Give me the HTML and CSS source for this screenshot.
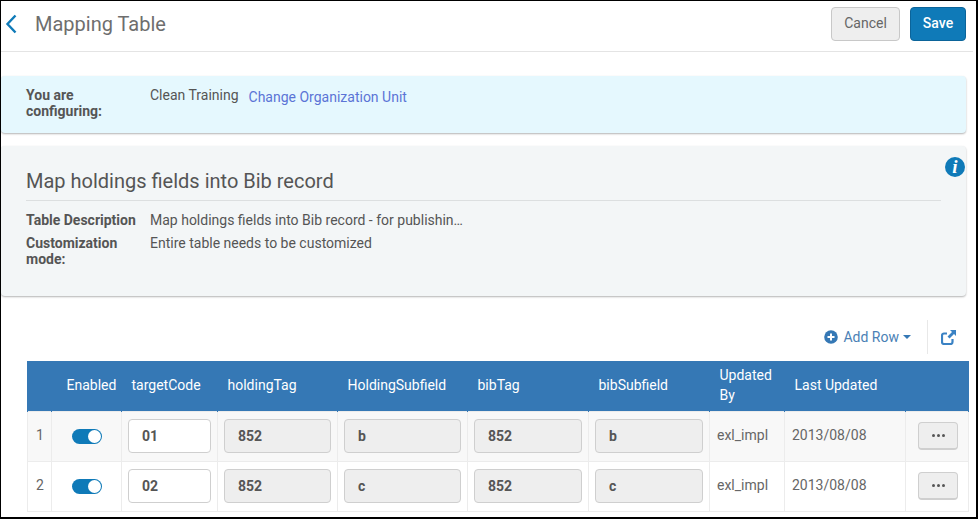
FILE: index.html
```html
<!DOCTYPE html>
<html lang="en">
<head>
<meta charset="utf-8">
<title>Mapping Table</title>
<link rel="stylesheet" href="styles.css">
</head>
<body>
<div class="frame">
  <header class="topbar">
    <div class="title-group">
      <svg class="back" width="12" height="20" viewBox="0 0 12 20"><path d="M10.500 1.500 2.500 10 10.500 18.500" fill="none" stroke="#0f7ab8" stroke-width="2.400"/></svg>
      <h1 class="page-title">Mapping Table</h1>
    </div>
    <div class="actions">
      <button class="btn btn-cancel">Cancel</button>
      <button class="btn btn-save">Save</button>
    </div>
  </header>
  <section class="card card-config">
    <div class="label config-label">You are configuring:</div>
    <div class="config-value">Clean Training</div>
    <a class="config-link">Change Organization Unit</a>
  </section>
  <section class="card card-info">
    <svg class="info-icon" width="20" height="20" viewBox="0 0 20 20"><circle cx="10" cy="10" r="10" fill="#0f7ab8"/><text class="info-i" x="10" y="15.500" text-anchor="middle">i</text></svg>
    <h2 class="info-title">Map holdings fields into Bib record</h2>
    <div class="info-row">
      <div class="label">Table Description</div>
      <div class="value">Map holdings fields into Bib record - for publishin…</div>
    </div>
    <div class="info-row">
      <div class="label">Customization mode:</div>
      <div class="value">Entire table needs to be customized</div>
    </div>
  </section>
  <div class="toolbar">
    <a class="add-row">
      <svg width="14" height="14" viewBox="0 0 14 14"><circle cx="7" cy="7" r="6.800" fill="#3578b5"/><path d="M7 3.500v7M3.500 7h7" stroke="#fff" stroke-width="2"/></svg>
      <span>Add Row</span>
      <span class="caret"></span>
    </a>
    <div class="tool-sep">
      <svg width="15" height="15" viewBox="0 0 15 15"><path d="M6 3.500H3A2 2 0 0 0 1 5.500v6.500a2 2 0 0 0 2 2h6.500a2 2 0 0 0 2-2V9" fill="none" stroke="#3a82c4" stroke-width="2.200"/><path d="M9 0h6v6l-2-2L8.500 8.500 6.500 6.500 11 2z" fill="#3a82c4"/></svg>
    </div>
  </div>
  <table class="grid">
    <thead>
      <tr>
        <th class="c-n"></th><th class="c-en">Enabled</th><th class="c-code">targetCode</th><th class="c-ht">holdingTag</th><th class="c-hs">HoldingSubfield</th><th class="c-bt">bibTag</th><th class="c-bs">bibSubfield</th><th class="c-by">Updated By</th><th class="c-last">Last Updated</th><th class="c-act"></th>
      </tr>
    </thead>
    <tbody>
      <tr class="odd">
        <td class="num">1</td>
        <td class="center"><span class="toggle"></span></td>
        <td><div class="field field-edit">01</div></td>
        <td><div class="field">852</div></td>
        <td><div class="field">b</div></td>
        <td><div class="field">852</div></td>
        <td><div class="field">b</div></td>
        <td class="txt">exl_impl</td>
        <td class="txt">2013/08/08</td>
        <td class="center cell-act"><button class="more"><span></span><span></span><span></span></button></td>
      </tr>
      <tr>
        <td class="num">2</td>
        <td class="center"><span class="toggle"></span></td>
        <td><div class="field field-edit">02</div></td>
        <td><div class="field">852</div></td>
        <td><div class="field">c</div></td>
        <td><div class="field">852</div></td>
        <td><div class="field">c</div></td>
        <td class="txt">exl_impl</td>
        <td class="txt">2013/08/08</td>
        <td class="center cell-act"><button class="more"><span></span><span></span><span></span></button></td>
      </tr>
    </tbody>
  </table>
</div>
</body>
</html>
```
FILE: styles.css
```css
* { box-sizing: border-box; }
html, body { margin: 0; padding: 0; }
body {
  width: 978px;
  height: 519px;
  overflow: hidden;
  background: #fff;
  font-family: Roboto, "Liberation Sans", sans-serif;
  font-size: 14px;
  color: #555;
}
.frame {
  width: 978px;
  height: 519px;
  border: 1px solid #000;
  border-right-width: 2px;
  border-bottom-width: 2px;
  overflow: hidden;
}
.topbar {
  height: 51px;
  border-bottom: 1px solid #e4e4e4;
  margin-right: 3px;
  display: flex;
  justify-content: space-between;
  align-items: flex-start;
  padding: 6px 7px 0 4px;
}
.title-group { display: flex; align-items: center; height: 34px; }
.back { display: block; margin-right: 18px; }
.page-title { margin: 0; font-size: 20px; font-weight: 400; color: #6e6e6e; }
.actions { display: flex; gap: 10px; }
.btn {
  height: 34px;
  border-radius: 4px;
  font: 14px Roboto, sans-serif;
  padding: 0 0 2px;
}
.btn-cancel { width: 69px; background: #eee; border: 1px solid #c8c8c8; color: #666; }
.btn-save { width: 56px; background: #0f7ab8; border: 1px solid #0b649a; color: #fff; font-weight: 500; }
.card {
  margin-right: 10px;
  border-radius: 4px;
  box-shadow: 0 1px 2px rgba(0,0,0,.3);
}
.card-config {
  margin-top: 24px;
  height: 57px;
  background: #e5f8fe;
  display: flex;
  align-items: flex-start;
  padding: 11px 0 0 25px;
  line-height: 16px;
}
.label { font-weight: 700; color: #555; width: 124px; flex: none; line-height: 16px; }
.config-label { padding-right: 30px; }
.config-value { color: #555; margin-right: 10px; }
.config-link { color: #5b74d6; margin-top: 2px; }
.card-info {
  position: relative;
  margin-top: 13px;
  height: 150px;
  background: #f3f6f7;
  padding: 24px 25px 0 25px;
}
.info-icon { position: absolute; right: 1px; top: 11px; }
.info-i { font: italic 700 19px "Liberation Serif", serif; fill: #fff; }
.info-title {
  margin: 0 0 11px;
  height: 31px;
  border-bottom: 1px solid #dcdfe0;
  font-size: 20px;
  font-weight: 400;
  line-height: 23px;
  color: #555;
}
.info-row { display: flex; line-height: 16px; margin-bottom: 7px; }
.toolbar {
  height: 65px;
  display: flex;
  justify-content: flex-end;
  align-items: flex-start;
  padding: 24px 11px 0 0;
  margin-right: 9px;
}
.add-row {
  display: flex;
  align-items: center;
  gap: 5px;
  height: 32px;
  color: #4a7fb5;
  margin-top: 1px;
  padding-bottom: 1px;
}
.caret {
  width: 0; height: 0;
  border-left: 4px solid transparent;
  border-right: 4px solid transparent;
  border-top: 4px solid #3578b5;
  margin-left: -1px;
}
.tool-sep {
  height: 34px;
  margin-left: 16px;
  padding: 10px 0 0 13px;
  border-left: 1px solid #e8e8e8;
}
.tool-sep svg { display: block; }
.grid {
  margin-left: 26px;
  width: 941px;
  border-collapse: collapse;
  table-layout: fixed;
  line-height: 16px;
}
.grid th {
  height: 50px;
  background: #3578b5;
  border-left: 1px solid #3578b5;
  border-right: 1px solid #3578b5;
  color: #fff;
  font-weight: 400;
  text-align: left;
  padding: 0 9.500px 2px;
  line-height: 20px;
}
.grid th.c-en { padding-left: 14.500px; padding-right: 0; }
.c-n { width: 24px; }
.c-en { width: 70px; }
.c-code { width: 96px; }
.c-ht { width: 120px; }
.c-hs { width: 130px; }
.c-bt { width: 121px; }
.c-bs { width: 121px; }
.c-by { width: 75px; }
.c-last { width: 121px; }
.c-act { width: 63px; }
.grid td {
  height: 50px;
  border: 1px solid #ececec;
  padding: 0 6px;
}
.grid td.cell-act { padding: 0 5px 0 7px; }
.grid tr.odd td { background: #f8f8f8; }
.grid td.num { color: #666; padding: 0 0 2px 8px; }
.center { text-align: center; }
.grid td.txt { color: #666; padding: 0 0 2px 7px; }
.toggle {
  display: inline-block;
  position: relative;
  width: 30px;
  height: 15px;
  border-radius: 8px;
  background: #0f7ab8;
  vertical-align: middle;
}
.toggle::after {
  content: "";
  position: absolute;
  right: 1px;
  top: 1px;
  width: 13px;
  height: 13px;
  border-radius: 50%;
  background: #fff;
}
.field {
  height: 34px;
  border: 1px solid #cfcfcf;
  border-radius: 4px;
  background: #eee;
  font-weight: 700;
  line-height: 33px;
  padding-left: 13px;
  color: #555;
}
.field-edit { background: #fff; }
.more {
  width: 40px;
  height: 28px;
  background: #eee;
  border: 1px solid #cfcfcf;
  border-bottom-width: 2px;
  border-radius: 4px;
  padding: 0;
  display: inline-flex;
  align-items: center;
  justify-content: center;
  gap: 2px;
  vertical-align: middle;
}
.more span { width: 3px; height: 3px; border-radius: 50%; background: #555; }
```
